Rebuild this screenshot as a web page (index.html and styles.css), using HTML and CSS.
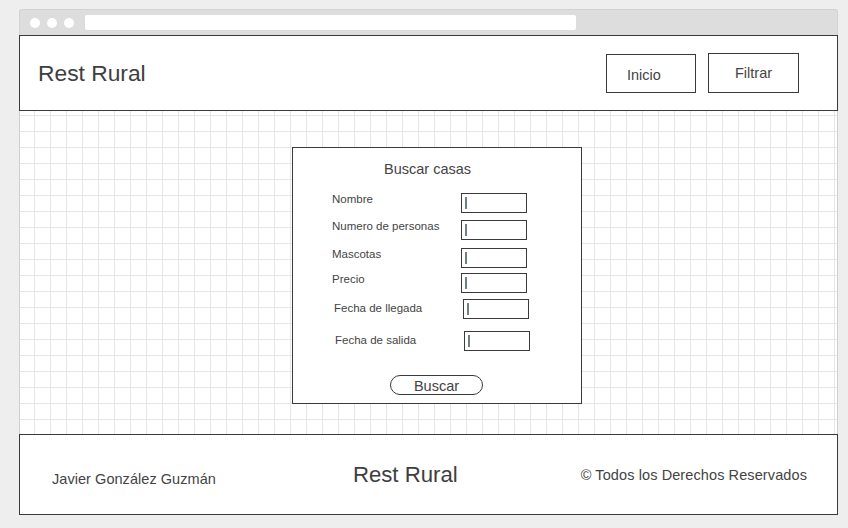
FILE: index.html
```html
<!DOCTYPE html>
<html lang="es">
<head>
<meta charset="utf-8">
<title>Rest Rural</title>
<link rel="stylesheet" href="styles.css">
</head>
<body>
<div class="window">
  <div class="chrome">
    <span class="dot"></span><span class="dot"></span><span class="dot"></span>
    <span class="address"></span>
  </div>
  <header class="header">
    <h1 class="brand">Rest Rural</h1>
    <nav class="nav">
      <a class="nav-btn nav-inicio">Inicio</a>
      <a class="nav-btn nav-filtrar">Filtrar</a>
    </nav>
  </header>
  <main class="canvas">
    <form class="search">
      <h2 class="search-title">Buscar casas</h2>
      <div class="row"><label class="lbl">Nombre</label><span class="field"><i class="caret"></i></span></div>
      <div class="row gap7"><label class="lbl">Numero de personas</label><span class="field"><i class="caret"></i></span></div>
      <div class="row gap8"><label class="lbl">Mascotas</label><span class="field"><i class="caret"></i></span></div>
      <div class="row gap5"><label class="lbl">Precio</label><span class="field"><i class="caret"></i></span></div>
      <div class="row gap6 shift2 low"><label class="lbl">Fecha de llegada</label><span class="field"><i class="caret"></i></span></div>
      <div class="row gap12 shift3 low"><label class="lbl">Fecha de salida</label><span class="field"><i class="caret"></i></span></div>
      <div class="actions"><span class="btn">Buscar</span></div>
    </form>
  </main>
  <footer class="footer">
    <span class="author">Javier González Guzmán</span>
    <span class="foot-brand">Rest Rural</span>
    <span class="rights">© Todos los Derechos Reservados</span>
  </footer>
</div>
</body>
</html>
```
FILE: styles.css
```css
* { box-sizing: border-box; }
html, body { margin: 0; padding: 0; }
body {
  background: #eeeeee;
  font-family: "Liberation Sans", Arial, sans-serif;
  color: #444;
  width: 848px;
  height: 528px;
  overflow: hidden;
}
.window {
  margin: 9px 0 0 19px;
  width: 819px;
}
.chrome {
  height: 26px;
  background: #dddddd;
  border: 1px solid #d2d2d2;
  border-bottom: none;
  border-radius: 3px 3px 0 0;
  display: flex;
  align-items: center;
  padding-left: 10px;
  gap: 7px;
}
.dot {
  width: 10px;
  height: 10px;
  border-radius: 50%;
  background: #fff;
}
.address {
  margin-left: 4px;
  width: 491px;
  height: 15px;
  background: #fff;
  border-radius: 2px;
}
.header {
  height: 76px;
  border: 1px solid #3a3a3a;
  background: #fff;
  display: flex;
  align-items: center;
  padding: 0 38px 0 18px;
}
.brand {
  margin: 0;
  font-weight: normal;
  font-size: 22.8px;
  line-height: 26px;
  color: #3e3e3e;
}
.nav {
  margin-left: auto;
  display: flex;
  align-items: center;
  gap: 12px;
}
.nav-btn {
  border: 1px solid #3a3a3a;
  font-size: 14.5px;
  color: #444;
  display: flex;
  align-items: center;
}
.nav-inicio {
  width: 90px;
  height: 39px;
  padding: 3px 0 0 20px;
  margin-top: 1px;
}
.nav-filtrar {
  width: 91px;
  height: 40px;
  justify-content: center;
  padding-bottom: 1px;
}
.canvas {
  height: 323px;
  background-color: #fff;
  border-left: 1px solid #cfcfcf;
  border-right: 1px solid #cfcfcf;
  background-image:
    linear-gradient(to right, #e6e6e6 1px, transparent 1px),
    linear-gradient(to bottom, #e6e6e6 1px, transparent 1px);
  background-size: 16px 16px;
  background-position: 14px 4px;
  padding: 36px 0 0 272px;
}
.search {
  width: 290px;
  height: 257px;
  border: 1px solid #3a3a3a;
  background: #fff;
  padding: 13px 0 0 39px;
  margin: 0;
}
.search-title {
  margin: 0 0 15px 52px;
  font-weight: normal;
  font-size: 14.5px;
  line-height: 17px;
  color: #444;
}
.row {
  display: flex;
  align-items: flex-start;
  height: 20px;
}
.gap7 { margin-top: 7px; }
.gap8 { margin-top: 8px; }
.gap5 { margin-top: 5px; }
.gap6 { margin-top: 6px; }
.gap12 { margin-top: 12px; }
.shift2 { padding-left: 2px; }
.shift3 { padding-left: 3px; }
.lbl {
  width: 129px;
  font-size: 11.5px;
  line-height: 13px;
  color: #444;
}
.low .lbl { padding-top: 3px; }
.field {
  width: 66px;
  height: 20px;
  border: 1px solid #3a3a3a;
  background: #fff;
  padding: 3px 0 0 3px;
}
.caret {
  display: block;
  width: 1.5px;
  height: 12px;
  background: #6f7f82;
}
.actions {
  margin-top: 24px;
  margin-left: 58px;
}
.btn {
  display: flex;
  align-items: center;
  justify-content: center;
  width: 93px;
  height: 20px;
  border: 1px solid #3a3a3a;
  border-radius: 10px;
  font-size: 14.5px;
  color: #444;
  padding-top: 1px;
}
.footer {
  height: 81px;
  border: 1px solid #3a3a3a;
  background: #fff;
  display: flex;
  align-items: center;
  padding: 0 30px 0 32px;
}
.author {
  font-size: 14.5px;
  margin-top: 8px;
  color: #444;
  letter-spacing: 0.05px;
}
.foot-brand {
  margin-left: 137px;
  font-size: 22.2px;
  color: #3e3e3e;
}
.rights {
  margin-left: auto;
  font-size: 14.5px;
  margin-top: 1px;
  color: #444;
  letter-spacing: 0.1px;
}
```
